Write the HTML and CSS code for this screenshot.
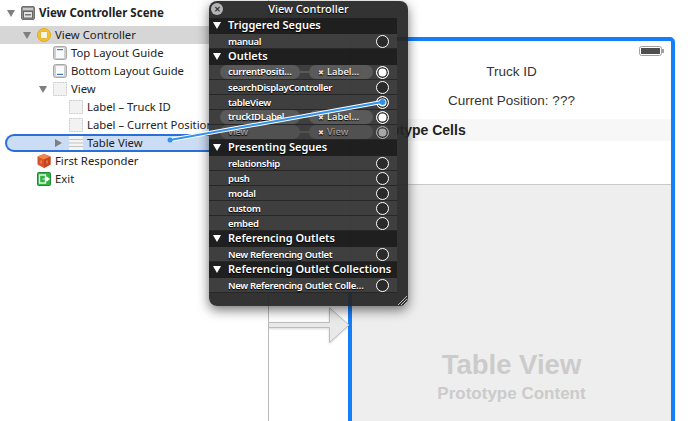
FILE: index.html
```html
<!DOCTYPE html>
<html lang="en">
<head>
<meta charset="utf-8">
<title>View Controller Scene</title>
<link rel="stylesheet" href="styles.css">
</head>
<body>
<div class="stage">
  <nav class="tree">
    <div class="row lvl0 scene"><i class="tri down"></i>
      <svg class="ico" viewBox="0 0 14 14"><rect x=".5" y=".5" width="13" height="13" rx="1.5" fill="#8d8d8d" stroke="#6f6f6f"/><rect x="2" y="2" width="10" height="2" fill="#c9c9c9"/><rect x="2.5" y="5.5" width="9" height="6.5" fill="#e2e2e2" stroke="#666"/><rect x="4" y="8" width="6" height="1.5" fill="#777"/></svg>
      <span>View Controller Scene</span></div>
    <div class="row lvl1 current"><i class="tri down"></i>
      <svg class="ico" viewBox="0 0 14 14"><circle cx="7" cy="7" r="6.6" fill="#f5c02c" stroke="#e0a415" stroke-width=".8"/><rect x="3.5" y="3.5" width="7" height="7" rx="1" fill="#f8f4e2" stroke="#c9a02a" stroke-width=".6"/></svg>
      <span>View Controller</span></div>
    <div class="row lvl2"><i class="tri"></i>
      <svg class="ico" viewBox="0 0 14 14"><rect x=".5" y=".5" width="13" height="13" rx="2" fill="#cfcfcf" stroke="#a8a8a8"/><rect x="3" y="2" width="8" height="10" fill="#fafafa"/><rect x="4" y="3" width="6" height="1.2" fill="#3b76c8"/></svg>
      <span>Top Layout Guide</span></div>
    <div class="row lvl2"><i class="tri"></i>
      <svg class="ico" viewBox="0 0 14 14"><rect x=".5" y=".5" width="13" height="13" rx="2" fill="#cfcfcf" stroke="#a8a8a8"/><rect x="3" y="2" width="8" height="10" fill="#fafafa"/><rect x="4" y="9.8" width="6" height="1.2" fill="#3b76c8"/></svg>
      <span>Bottom Layout Guide</span></div>
    <div class="row lvl2"><i class="tri down"></i>
      <svg class="ico" viewBox="0 0 14 14"><rect x=".5" y=".5" width="13" height="13" fill="#f2f2f2" stroke="#c6c6c6" stroke-dasharray="1 .6"/></svg>
      <span>View</span></div>
    <div class="row lvl3"><i class="tri"></i>
      <svg class="ico" viewBox="0 0 14 14"><rect x=".5" y=".5" width="13" height="13" fill="#f2f2f2" stroke="#c6c6c6" stroke-dasharray="1 .6"/></svg>
      <span>Label – Truck ID</span></div>
    <div class="row lvl3"><i class="tri"></i>
      <svg class="ico" viewBox="0 0 14 14"><rect x=".5" y=".5" width="13" height="13" fill="#f2f2f2" stroke="#c6c6c6" stroke-dasharray="1 .6"/></svg>
      <span>Label – Current Position: ???</span></div>
    <div class="row lvl3 selected"><i class="tri right"></i>
      <svg class="ico" viewBox="0 0 14 14"><rect width="14" height="14" fill="#f4f4f4"/><path d="M0 3.5h14M0 7h14M0 10.500h14" stroke="#c4c4c4"/></svg>
      <span>Table View</span></div>
    <div class="row lvl1"><i class="tri"></i>
      <svg class="ico" viewBox="0 0 14 14"><path d="M7 0l6.500 2.500v8L7 14 .5 10.500v-8z" fill="#d9532a"/><path d="M7 5.500L.5 2.500 7 0l6.500 2.500z" fill="#f0884a"/><path d="M7 5.500V14l6.500-3.500v-8z" fill="#c8441f"/><path d="M4 6.500v3M10 6.500v3" stroke="#f3a06d"/></svg>
      <span>First Responder</span></div>
    <div class="row lvl1"><i class="tri"></i>
      <svg class="ico" viewBox="0 0 14 14"><rect x=".5" y=".5" width="13" height="13" rx="1" fill="#2fb344" stroke="#1f8a31"/><rect x="2.500" y="3" width="6" height="8" fill="none" stroke="#fff" stroke-width="1.300"/><path d="M5.500 7h4V4.800L12.500 7l-3 2.200V7" fill="#fff" stroke="#fff" stroke-width=".8"/></svg>
      <span>Exit</span></div>
  </nav>

  <main class="canvas">
    <section class="device">
      <div class="status">
        <svg class="battery" viewBox="0 0 25 10"><rect x=".5" y=".5" width="22" height="9" rx="2" fill="#fff" stroke="#a0a0a0"/><rect x="2" y="2" width="19" height="6" fill="#4f4f4f"/><rect x="23" y="3" width="2" height="4" fill="#a0a0a0"/></svg>
      </div>
      <div class="label truck">Truck ID</div>
      <div class="label position">Current Position: ???</div>
      <div class="band">Prototype Cells</div>
      <div class="cell"></div>
      <div class="content">
        <div class="big">Table View</div>
        <div class="small">Prototype Content</div>
      </div>
    </section>
    <svg class="segue" viewBox="0 0 82 37"><path d="M0 15.500h61.500V.8L81 18 61.500 35.500V20.500H0" fill="#e9e9e9" stroke="#bcbcbc"/></svg>
  </main>

  <aside class="panel">
    <header class="title"><span class="close">✕</span>View Controller</header>
    <div class="list">
      <h3 class="head"><i class="wtri"></i>Triggered Segues</h3>
      <div class="item"><span class="name">manual</span><b class="dot"></b></div>
      <h3 class="head"><i class="wtri"></i>Outlets</h3>
      <div class="item"><span class="pill from">currentPositi…</span><i class="link"></i><span class="pill to"><em>✖</em>Label…</span><b class="dot on"></b></div>
      <div class="item"><span class="name">searchDisplayController</span><b class="dot"></b></div>
      <div class="item"><span class="name">tableView</span><b class="dot on"></b></div>
      <div class="item"><span class="pill from">truckIDLabel</span><i class="link"></i><span class="pill to"><em>✖</em>Label…</span><b class="dot on"></b></div>
      <div class="item dim"><span class="pill from">view</span><i class="link"></i><span class="pill to"><em>✖</em>View</span><b class="dot on"></b></div>
      <h3 class="head"><i class="wtri"></i>Presenting Segues</h3>
      <div class="item"><span class="name">relationship</span><b class="dot"></b></div>
      <div class="item"><span class="name">push</span><b class="dot"></b></div>
      <div class="item"><span class="name">modal</span><b class="dot"></b></div>
      <div class="item"><span class="name">custom</span><b class="dot"></b></div>
      <div class="item"><span class="name">embed</span><b class="dot"></b></div>
      <h3 class="head"><i class="wtri"></i>Referencing Outlets</h3>
      <div class="item"><span class="name">New Referencing Outlet</span><b class="dot"></b></div>
      <h3 class="head"><i class="wtri"></i>Referencing Outlet Collections</h3>
      <div class="item"><span class="name">New Referencing Outlet Colle…</span><b class="dot"></b></div>
    </div>
    <svg class="grip" viewBox="0 0 10 10"><path d="M1 10L10 1M4 10l6-6M7 10l3-3" stroke="#bdbdbd" stroke-width="1"/></svg>
  </aside>

  <svg class="wire" viewBox="0 0 699 421"><path d="M170 140L382 102" stroke="#fff" stroke-width="4" stroke-linecap="round"/><path d="M170 140L382 102" stroke="#2f93ee" stroke-width="2"/><circle cx="170" cy="140" r="2.500" fill="#2f93ee"/><circle cx="382.500" cy="102" r="3" fill="#2f93ee"/></svg>
</div>
</body>
</html>
```
FILE: styles.css
```css
* { box-sizing: border-box; }
html, body { margin: 0; padding: 0; background: #fff; }
.stage { position: relative; display: flex; width: 699px; height: 421px; overflow: hidden; }

/* outline tree */
.tree { width: 269px; flex: none; padding-top: 4px; border-right: 1px solid #b9b9b9; font: 11.300px/18px "Noto Sans", sans-serif; color: #222; }
.row { display: flex; align-items: center; height: 18px; white-space: nowrap; overflow: hidden; }
.scene { margin-bottom: 4px; font-size: 11.500px; font-weight: bold; }
.lvl0 { padding-left: 3px; }
.lvl1 { padding-left: 19px; }
.lvl2 { padding-left: 35px; }
.lvl3 { padding-left: 51px; }
.current { background: #d6d6d6; }
.selected { margin-left: 5px; padding-left: 44px; border: 2px solid #2a6fd8; border-right: 0; border-radius: 9px 0 0 9px; background: #cbdcf5; }
.tri { flex: none; width: 16px; height: 8px; position: relative; }
.tri.down::before { content: ""; position: absolute; left: 4px; top: 1px; border: 4px solid transparent; border-top: 7px solid #7f7f7f; border-bottom: 0; }
.tri.right::before { content: ""; position: absolute; left: 4px; top: 0; border: 4px solid transparent; border-left: 7px solid #7f7f7f; border-right: 0; }
.ico { flex: none; width: 14px; height: 14px; margin: 0 4px 0 2px; }

/* canvas */
.canvas { flex: 1; position: relative; height: 421px; padding: 37px 24px 0 79px; overflow: hidden; }
.device { height: 400px; border: 4px solid #147efb; border-radius: 0 5px 0 0; background: #fff; font-family: "Liberation Sans", sans-serif; color: #333; }
.status { display: flex; justify-content: flex-end; height: 19px; padding: 5px 7px 0 0; }
.battery { display: block; width: 25px; height: 10px; }
.label { font-size: 13.500px; line-height: 16px; text-align: center; }
.truck { margin-top: 4px; }
.position { margin-top: 13px; }
.band { height: 22px; margin-top: 10px; padding-left: 11px; background: #f7f7f7; font-size: 14px; font-weight: bold; line-height: 22px; color: #222; }
.cell { height: 43px; }
.content { height: 240px; padding-top: 165px; border-top: 1px solid #c9c9c9; background: #eee; color: #cbcbcb; font-weight: bold; text-align: center; }
.big { font-size: 27.500px; line-height: 30px; }
.small { font-size: 17px; line-height: 20px; margin-top: 4px; }
.segue { position: absolute; left: -1px; top: 307px; width: 82px; height: 37px; filter: drop-shadow(0 1px 1px rgba(0,0,0,.15)); }

/* connections panel */
.panel { position: absolute; left: 209px; top: 1px; width: 199px; height: 305px; padding-right: 11px; border-radius: 8px; background: rgba(38,38,38,.94); box-shadow: 0 4px 12px rgba(0,0,0,.55); color: #fff; font-family: "Noto Sans", sans-serif; text-shadow: 0 1px 1px #000; }
.title { position: relative; width: 199px; height: 17px; font-size: 11px; font-weight: 500; line-height: 16px; text-align: center; }
.close { position: absolute; left: 2px; top: 2px; width: 12px; height: 12px; border-radius: 50%; background: #b5b5b5; color: #333; font-size: 8px; font-weight: bold; line-height: 12px; text-shadow: none; }
.head { display: flex; align-items: center; height: 16px; margin: 0; padding: 0 0 2px 4px; background: rgba(28,28,28,.85); font-size: 11px; font-weight: 600; line-height: 14px; white-space: nowrap; }
.wtri { flex: none; width: 0; height: 0; margin-right: 7px; border: 4px solid transparent; border-top: 7px solid #fff; border-bottom: 0; }
.item { display: flex; align-items: center; height: 15px; border-bottom: 1px solid rgba(30,30,30,.7); background: rgba(66,66,66,.85); font-size: 9.500px; font-weight: 600; letter-spacing: -.3px; white-space: nowrap; }
.name { margin-left: 19px; }
.pill { display: block; height: 14px; border-radius: 7px; background: #5a5a5a; line-height: 14px; overflow: hidden; }
.from { width: 80px; margin-left: 11px; padding-left: 8px; }
.to { width: 64px; padding-left: 9px; font-weight: 500; letter-spacing: 0; }
.to em { margin-right: 3px; font-size: 7px; font-style: normal; color: #ddd; }
.link { flex: none; width: 9px; height: 2px; background: #5a5a5a; }
.dot { flex: none; width: 13px; height: 13px; margin: 0 8px 0 auto; border: 1.500px solid #fff; border-radius: 50%; background: #2a2a2a; }
.dot.on { background: #fff; box-shadow: inset 0 0 0 1.500px #333; }
.dim { color: rgba(255,255,255,.55); }
.dim .pill, .dim .link { background: rgba(90,90,90,.7); }
.dim .dot { opacity: .55; }
.grip { position: absolute; right: 1px; bottom: 1px; width: 10px; height: 10px; }
.wire { position: absolute; left: 0; top: 0; width: 699px; height: 421px; pointer-events: none; }
```
